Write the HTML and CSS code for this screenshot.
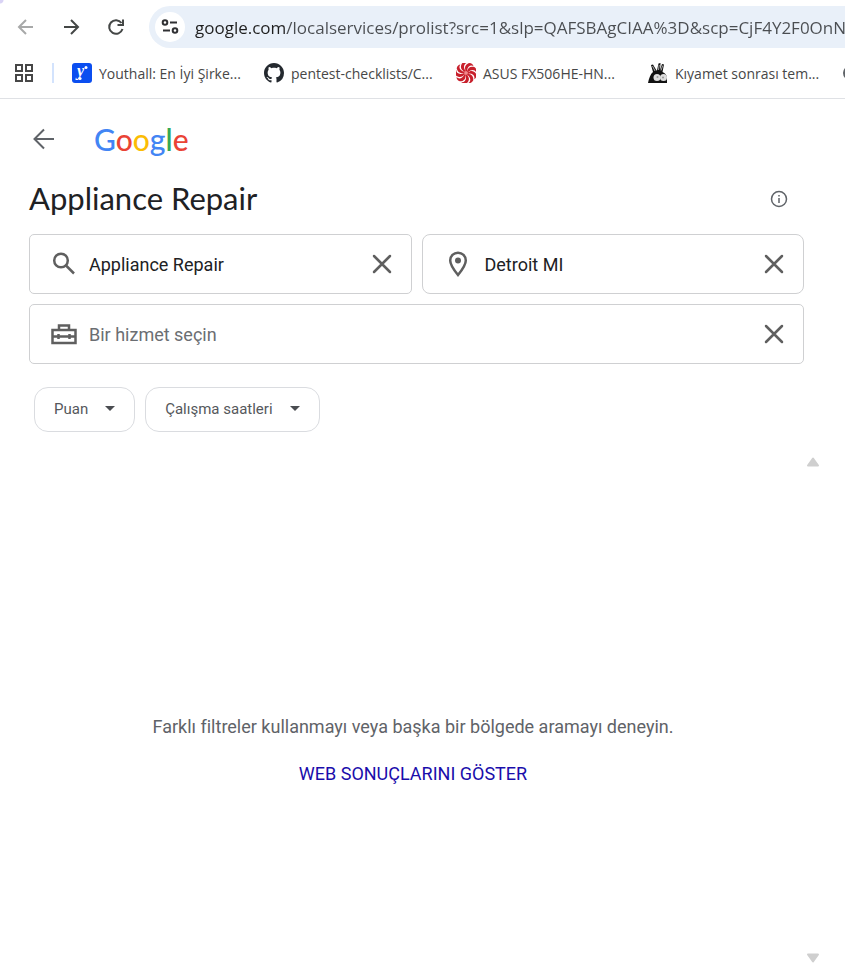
FILE: index.html
```html
<!DOCTYPE html>
<html lang="tr">
	<head>
		<meta charset="UTF-8">
		<meta name="viewport" content="width=device-width, initial-scale=1">
		<title>Appliance Repair</title>
		<link rel="stylesheet" href="styles.css">
	</head>
	<body>
		<div class="browser">
			<div class="toolbar">
				<button class="nav off" type="button" aria-label="Geri" disabled>
					<svg width="20" height="20" viewBox="0 0 20 20"><path d="M17 10H3M10 3l-7 7 7 7"/></svg>
				</button>
				<button class="nav" type="button" aria-label="İleri">
					<svg width="20" height="20" viewBox="0 0 20 20"><path d="M3 10h14M10 3l7 7-7 7"/></svg>
				</button>
				<button class="nav" type="button" aria-label="Yenile">
					<svg width="20" height="20" viewBox="0 0 20 20"><path d="M16.500 12A6.800 6.800 0 1 1 15.500 6"/><path d="M17 2.500v5.500h-5.500"/></svg>
				</button>
				<div class="omnibox">
					<button class="site" type="button" aria-label="Site bilgileri">
						<svg width="20" height="20" viewBox="0 0 20 20"><circle cx="5" cy="5.500" r="2.300"/><path d="M10 5.500h7M3 13.500h7"/><circle cx="15" cy="13.500" r="2.300"/></svg>
					</button>
					<input class="url" type="text" aria-label="Adres" value="google.com/localservices/prolist?src=1&amp;slp=QAFSBAgCIAA%3D&amp;scp=CjF4Y2F0OnNlcnZpY2U">
				</div>
			</div>
			<div class="bookmarks">
				<button class="apps" type="button" aria-label="Uygulamalar">
					<svg width="20" height="20" viewBox="0 0 20 20"><path d="M2 2h6v6H2zM12 2h6v6h-6zM2 12h6v6H2zM12 12h6v6h-6z"/></svg>
				</button>
				<span class="line"></span>
				<a class="mark" href="#">
					<svg width="20" height="20" viewBox="0 0 20 20"><rect width="20" height="20" rx="3" fill="#0b4ef0"/><text x="5" y="13" class="ylogo">y</text><circle cx="14" cy="4.500" r="1.500" fill="#fff"/><circle cx="8" cy="15.500" r="1.600" fill="#fff"/></svg>
					<span>Youthall: En İyi Şirke...</span>
				</a>
				<a class="mark" href="#">
					<svg width="20" height="20" viewBox="0 0 16 16"><path fill="#24292f" d="M8 0C3.580 0 0 3.580 0 8c0 3.540 2.290 6.530 5.470 7.590.4.070.55-.17.55-.38 0-.19-.01-.82-.01-1.490-2.010.37-2.530-.49-2.690-.94-.09-.23-.48-.94-.82-1.130-.28-.15-.68-.52-.01-.53.63-.01 1.080.58 1.230.82.72 1.210 1.870.87 2.330.66.07-.52.28-.87.51-1.070-1.780-.2-3.640-.89-3.640-3.950 0-.87.31-1.590.82-2.150-.08-.2-.36-1.020.08-2.120 0 0 .67-.21 2.200.82.64-.18 1.320-.27 2-.27s1.360.09 2 .27c1.530-1.040 2.200-.82 2.200-.82.44 1.100.16 1.920.08 2.120.51.56.82 1.270.82 2.150 0 3.070-1.870 3.750-3.650 3.950.29.25.54.73.54 1.480 0 1.070-.01 1.930-.01 2.200 0 .21.15.46.55.38A8.010 8.010 0 0 0 16 8c0-4.420-3.580-8-8-8z"/></svg>
					<span>pentest-checklists/C...</span>
				</a>
				<a class="mark" href="#">
					<svg width="20" height="20" viewBox="-10 -10 20 20">
						<defs><path id="blade" d="M0-1.500C-2-5-1-8.500 3-10C6-9.800 7-8.500 7.500-7C5-8.500 1.500-7 1-2z" fill="#c8202c"/></defs>
						<circle r="3" fill="#f08a8e"/>
						<use href="#blade"/><use href="#blade" transform="rotate(40)"/><use href="#blade" transform="rotate(80)"/><use href="#blade" transform="rotate(120)"/><use href="#blade" transform="rotate(160)"/><use href="#blade" transform="rotate(200)"/><use href="#blade" transform="rotate(240)"/><use href="#blade" transform="rotate(280)"/><use href="#blade" transform="rotate(320)"/>
					</svg>
					<span>ASUS FX506HE-HN...</span>
				</a>
				<a class="mark" href="#">
					<svg width="20" height="20" viewBox="0 0 20 20"><path fill="#111" d="M0 20C1 15 2.500 11 5 9L3 2l2-.5L8.500 7.500 9 7.500 10.500.5l2-.5L12 7l2-6 2 .5L14.500 9C17 10 19 12 19 15v5z"/><path stroke="#aaa" d="M4.500 3L7 8M11.200 2L10.500 7M14.700 2.500L13 7.500"/><circle cx="9" cy="14.500" r="3.500" fill="#ddd"/><circle cx="15.500" cy="14.500" r="3.500" fill="#ddd"/><circle cx="9.500" cy="14" r="1" fill="#999"/><circle cx="15" cy="14.500" r="1" fill="#999"/></svg>
					<span>Kıyamet sonrası tem...</span>
				</a>
				<a class="mark" href="#" aria-label="Yer işareti">
					<svg width="20" height="20" viewBox="0 0 20 20"><circle cx="10" cy="10" r="7" fill="#5f6368"/></svg>
				</a>
			</div>
		</div>

		<div class="page">
			<div class="header">
				<a class="back" href="#" aria-label="Geri">
					<svg width="24" height="24" viewBox="0 0 24 24"><path d="M22 12H3M12 2.500L2.500 12l9.500 9.500"/></svg>
				</a>
				<a class="logo" href="#" aria-label="Google"><span class="b">G</span><span class="r">o</span><span class="y">o</span><span class="b">g</span><span class="g">l</span><span class="r">e</span></a>
			</div>
			<div class="title">
				<h1>Appliance Repair</h1>
				<button class="info" type="button" aria-label="Bilgi">
					<svg width="18" height="18" viewBox="0 0 18 18"><circle cx="9" cy="9" r="7.500"/><path d="M9 8v5M9 5v1.500"/></svg>
				</button>
			</div>
			<form class="search">
				<div class="field">
					<svg class="icon" width="28" height="28" viewBox="0 0 28 28"><circle cx="11" cy="10.500" r="6.800"/><path d="M16 15.500l8 8"/></svg>
					<input type="text" aria-label="Hizmet türü" value="Appliance Repair">
					<button class="clear" type="button" aria-label="Temizle"><svg width="20" height="20" viewBox="0 0 20 20"><path d="M2 2l16 16M18 2L2 18"/></svg></button>
				</div>
				<div class="field place">
					<svg class="icon" width="28" height="28" viewBox="0 0 28 28"><path d="M14 25C9.500 19.500 6.200 15.200 6.200 10.500a7.800 7.800 0 0 1 15.600 0C21.800 15.200 18.500 19.500 14 25z"/><circle class="dot" cx="14" cy="10.500" r="3"/></svg>
					<input type="text" aria-label="Konum" value="Detroit MI">
					<button class="clear" type="button" aria-label="Temizle"><svg width="20" height="20" viewBox="0 0 20 20"><path d="M2 2l16 16M18 2L2 18"/></svg></button>
				</div>
				<div class="field wide">
					<svg class="icon" width="28" height="28" viewBox="0 0 28 28"><path d="M2.500 10h23v13h-23zM9 10V5.500h10V10M3 16.500h22M8.500 14v5M19.500 14v5"/></svg>
					<input type="text" aria-label="Hizmet" placeholder="Bir hizmet seçin">
					<button class="clear" type="button" aria-label="Temizle"><svg width="20" height="20" viewBox="0 0 20 20"><path d="M2 2l16 16M18 2L2 18"/></svg></button>
				</div>
			</form>
			<div class="filters">
				<button class="chip" type="button">Puan <i class="caret"></i></button>
				<button class="chip" type="button">Çalışma saatleri <i class="caret"></i></button>
			</div>
		</div>

		<div class="results">
			<div class="empty">
				<p>Farklı filtreler kullanmayı veya başka bir bölgede aramayı deneyin.</p>
				<a href="#">WEB SONUÇLARINI GÖSTER</a>
			</div>
			<div class="scroll">
				<button type="button" aria-label="Yukarı kaydır"><svg width="14" height="10" viewBox="0 0 14 10"><path d="M7 1.500L12 8.500H2z"/></svg></button>
				<button type="button" aria-label="Aşağı kaydır"><svg width="14" height="10" viewBox="0 0 14 10"><path d="M7 8.500L12 1.500H2z"/></svg></button>
			</div>
		</div>
	</body>
</html>
```
FILE: styles.css
```css
*{margin: 0;padding: 0;box-sizing: border-box;text-decoration: none;}
body{min-height: 100vh;display: flex;flex-direction: column;background: #fff;
font-family: Roboto, "Liberation Sans", sans-serif;color: #202124;}
button{border: 0;background: none;display: flex;align-items: center;justify-content: center;font-family: inherit;flex: none;}
input{border: 0;outline: 0;background: none;min-width: 0;flex: 1;font-family: inherit;}
svg{display: block;flex: none;fill: none;}

/* browser bars */
.browser{border-bottom: 1px solid #dfe1e5;overflow: hidden;font-family: "Open Sans", "Noto Sans", sans-serif;
background: radial-gradient(circle at 0 0, #d9d3f5 3px, #fff 4px);}
.toolbar{display: flex;align-items: center;gap: 17px;height: 54px;padding-left: 12px;}
.nav{width: 28px;height: 28px;}
.nav svg{stroke: #444746;stroke-width: 2;}
.off svg{stroke: #a8a9a9;}
.omnibox{flex: 1;min-width: 0;display: flex;align-items: center;gap: 10px;height: 42px;margin-left: 2px;padding-left: 6px;
background: #e9f0f9;border-radius: 21px 0 0 21px;}
.site{width: 30px;height: 30px;border-radius: 50%;background: #fff;}
.site svg{stroke: #303134;stroke-width: 2;}
.url{height: 30px;font-size: 17px;color: transparent;
background: linear-gradient(to right, #1f1f1f 92px, #4a4d51 92px);-webkit-background-clip: text;background-clip: text;}
.bookmarks{display: flex;align-items: center;height: 44px;padding: 0 0 6px 14px;}
.apps svg{stroke: #474747;stroke-width: 2;}
.line{width: 2px;height: 20px;margin: 0 18px;background: #d3e3fd;flex: none;}
.mark{display: flex;align-items: center;gap: 7px;width: 170px;margin-right: 22px;flex: none;
font-size: 14px;color: #474747;white-space: nowrap;}
.ylogo{font: italic bold 16px "Liberation Serif", serif;fill: #fff;}

/* page */
.page{padding: 22px 41px 0 29px;}
.header{display: flex;align-items: center;height: 36px;gap: 38px;padding-left: 3px;}
.back svg{stroke: #5f6368;stroke-width: 2;}
.logo{font: 500 30px Lato, sans-serif;line-height: 36px;}
.b{color: #4285f4;}
.r{color: #ea4335;}
.y{color: #fbbc05;}
.g{color: #34a853;}
.title{display: flex;align-items: center;justify-content: space-between;height: 40px;margin: 22px 0 15px;padding-right: 16px;}
.title h1{font: 400 31px Lato, sans-serif;line-height: 38px;padding-bottom: 2px;color: #202124;}
.info svg{stroke: #5f6368;stroke-width: 1.5;}
.search{display: grid;grid-template-columns: 1fr 1fr;gap: 10px;}
.field{display: flex;align-items: center;height: 60px;padding: 0 19px 0 20px;border: 1px solid #cfd0d2;border-radius: 5px;}
.place{border-radius: 8px;}
.wide{grid-column: span 2;}
.field input{height: 30px;font-size: 18px;margin-left: 11px;color: #202124;}
.field input::placeholder{color: #6b6e72;opacity: 1;}
.place .icon{margin-left: 1px;}
.place input{margin-left: 13px;}
.icon{stroke: #5f5f5f;stroke-width: 2.5;}
.dot{fill: #5f5f5f;stroke: none;}
.clear svg{stroke: #5f5f5f;stroke-width: 2.5;stroke-linecap: round;}
.filters{display: flex;gap: 10px;padding: 23px 5px 20px;}
.chip{height: 45px;gap: 17px;padding: 0 19px 2px;border: 1px solid #dadce0;border-radius: 14px;font-size: 15px;color: #55585c;}
.caret{border: 5px solid transparent;border-top-color: #4a4d51;border-bottom: 0;}

/* results */
.results{flex: 1;display: flex;padding: 5px 20px 5px 25px;}
.empty{flex: 1;padding: 259px 0 0;text-align: center;font-size: 18px;line-height: 22px;color: #5f6368;}
.empty p{margin-bottom: 25px;}
.empty a{color: #1a0dab;}
.scroll{width: 24px;display: flex;flex-direction: column;justify-content: space-between;align-items: center;}
.scroll path{fill: #cfcfcf;stroke: #cfcfcf;stroke-width: 2;stroke-linejoin: round;}
```
